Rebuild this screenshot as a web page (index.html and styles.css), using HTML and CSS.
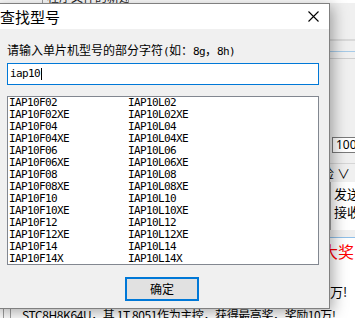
FILE: index.html
```html
<!DOCTYPE html>
<html lang="zh-CN">
<head>
<meta charset="utf-8">
<title>查找型号</title>
<link rel="stylesheet" href="styles.css">
</head>
<body>
<div class="app">
  <div class="app-top"><div class="app-tab"><span>程序文件的新建</span></div></div>
  <div class="app-mid">
    <div class="app-under"></div>
    <div class="app-side">
      <div class="s-blk s-h36"></div>
      <div class="s-line s-grey2"></div>
      <div class="s-blk s-h10"></div>
      <div class="s-line s-blue"></div>
      <div class="s-blk s-h6"></div>
      <div class="s-line s-grey"></div>
      <div class="s-blk s-h78"></div>
      <div class="s-input">100</div>
      <div class="s-blk s-h10"></div>
      <div class="s-tab">检 ∨</div>
      <div class="s-log"><div>发送</div><div>接收</div></div>
      <div class="s-blk s-h7"></div>
      <div class="s-line s-blue2"></div>
      <div class="s-red">大奖</div>
      <div class="s-note">万!</div>
    </div>
  </div>
  <div class="app-bottom"><div class="gutter"></div><span>STC8H8K64U，其 1T 8051作为主控，获得最高奖，奖励10万!</span></div>
</div>

<div class="dialog">
  <div class="titlebar">
    <span class="title">查找型号</span>
    <svg class="close" width="11" height="11" viewBox="0 0 11 11"><path d="M0.5 0.5 L10.5 10.5 M10.5 0.5 L0.5 10.5" stroke="#000" stroke-width="1.1" fill="none"/></svg>
  </div>
  <div class="dlg-body">
    <div class="label">请输入单片机型号的部分字符<span class="lat">(</span>如：<span class="lat">8g</span>，<span class="lat">8h)</span></div>
    <div class="input"><span class="lat">iap10</span><span class="caret"></span></div>
    <div class="list">
      <div class="col">
        <div>IAP10F02</div><div>IAP10F02XE</div><div>IAP10F04</div><div>IAP10F04XE</div>
        <div>IAP10F06</div><div>IAP10F06XE</div><div>IAP10F08</div><div>IAP10F08XE</div>
        <div>IAP10F10</div><div>IAP10F10XE</div><div>IAP10F12</div><div>IAP10F12XE</div>
        <div>IAP10F14</div><div>IAP10F14X</div>
      </div>
      <div class="col">
        <div>IAP10L02</div><div>IAP10L02XE</div><div>IAP10L04</div><div>IAP10L04XE</div>
        <div>IAP10L06</div><div>IAP10L06XE</div><div>IAP10L08</div><div>IAP10L08XE</div>
        <div>IAP10L10</div><div>IAP10L10XE</div><div>IAP10L12</div><div>IAP10L12XE</div>
        <div>IAP10L14</div><div>IAP10L14X</div>
      </div>
    </div>
    <div class="btn">确定</div>
  </div>
</div>
</body>
</html>
```

FILE: styles.css
```css
* { box-sizing: border-box; margin: 0; padding: 0; }
html, body { width: 355px; height: 318px; overflow: hidden; }
body {
  position: relative;
  background: #f0f0f0;
  font-family: "Noto Sans CJK SC", "Noto Sans", sans-serif;
  font-size: 12px;
  color: #000;
}

/* background application */
.app { display: flex; flex-direction: column; height: 318px; }
.app-top { height: 3px; overflow: hidden; background: #fff; padding-left: 42px; }
.app-tab { width: 87px; height: 3px; border-left: 1px solid #a0a0a0; border-right: 1px solid #a0a0a0; overflow: hidden; }
.app-tab span { display: block; margin-top: -9px; padding-left: 4px; line-height: 12px; white-space: nowrap; color: #222; }
.app-mid { flex: 1; display: flex; min-height: 0; }
.app-under { flex: 1; background: #fff; }
.app-side { width: 25px; display: flex; flex-direction: column; background: #f0f0f0; }
.s-h36 { height: 36px; }
.s-h10 { height: 10px; }
.s-h6 { height: 6px; }
.s-h7 { height: 7px; }
.s-h78 { height: 78px; }
.s-line { height: 1px; }
.s-grey2 { height: 2px; background: #d9d9d9; }
.s-grey { background: #cfcfcf; }
.s-blue { background: #a6cbe8; }
.s-blue2 { background: #8fbfe8; }
.s-input {
  height: 16px; margin-left: 2px; background: #fff;
  border: 1px solid #7a7a7a; border-right: none;
  padding-left: 3px; font-family: "Noto Sans", sans-serif; font-size: 12px; line-height: 14px;
  white-space: nowrap; overflow: hidden;
}
.s-tab { height: 19px; border-top: 1px solid #d6d6d6; margin-left: -9px; font-size: 13px; line-height: 17px; white-space: nowrap; }
.s-log { height: 48px; background: #fff; border-left: 1px solid #a0a0a0; padding: 3px 0 0 3px; font-size: 13px; line-height: 18px; white-space: nowrap; overflow: hidden; }
.s-red { height: 30px; background: #fff; margin-left: -8px; padding-top: 4px; color: #f00; font-size: 16px; line-height: 18px; white-space: nowrap; }
.s-note { height: 40px; background: #fff; padding-top: 16px; font-size: 13px; line-height: 16px; white-space: nowrap; }
.app-bottom { height: 10px; background: #fff; display: flex; overflow: hidden; white-space: nowrap; line-height: 14px; letter-spacing: -0.4px; }
.gutter { width: 8px; height: 10px; margin-left: 3px; border-left: 1px solid #a0a0a0; border-right: 1px solid #a0a0a0; flex: none; }
.app-bottom span { padding-left: 11px; }

/* dialog window */
.dialog {
  position: absolute; left: -8px; top: 3px;
  width: 338px; height: 306px;
  border: 1px solid #808080;
  background: #f0f0f0;
  box-shadow: 3px 3px 14px rgba(0, 0, 0, 0.35);
  display: flex; flex-direction: column;
}
.titlebar { height: 25px; background: #fff; display: flex; align-items: center; padding-left: 7px; flex: none; }
.title { font-size: 15px; line-height: 25px; }
.close { margin-left: auto; margin-right: 10px; display: block; }
.dlg-body { flex: 1; display: flex; flex-direction: column; padding: 15px 10px 9px 14px; }
.lat { font-family: "DejaVu Sans Mono", monospace; font-size: 11px; letter-spacing: -0.62px; }
.label { line-height: 12px; white-space: nowrap; }
.input {
  margin-top: 5px; height: 22px; background: #fff;
  border: 1px solid #0078d7; padding-left: 2px;
  display: flex; align-items: center; line-height: 12px;
}
.caret { display: inline-block; width: 1px; height: 12px; background: #000; margin-left: 1px; }
.list {
  margin-top: 11px; height: 169px; background: #fff;
  border: 1px solid #828790; padding-left: 1px;
  display: flex; overflow: hidden;
  font-family: "DejaVu Sans Mono", monospace; font-size: 11px; letter-spacing: -0.62px; line-height: 12px;
}
.col { width: 119px; flex: none; }
.col div { height: 12px; white-space: nowrap; }
.btn {
  margin-top: 12px; margin-left: 118px; width: 74px; height: 24px;
  border: 2px solid #0078d7; background: #e1e1e1;
  display: flex; align-items: center; justify-content: center; line-height: 14px;
}
```
